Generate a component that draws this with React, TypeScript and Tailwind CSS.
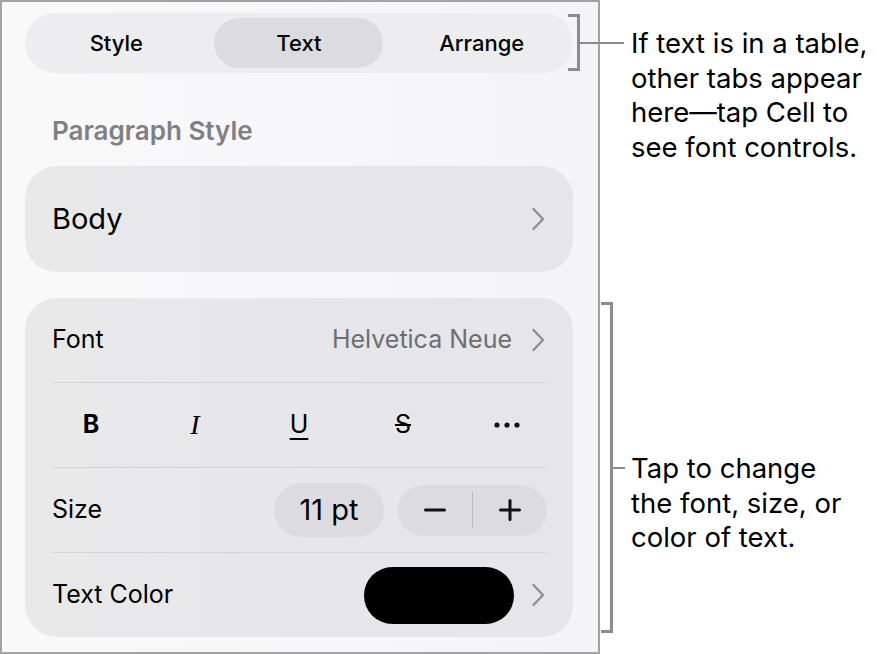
import React from 'react';

const Chevron = () => (
  <svg width="14" height="24" viewBox="0 0 14 24" fill="none" stroke="#8e8e93" strokeWidth="2.4" strokeLinecap="round" strokeLinejoin="round">
    <path d="M2.5 2 L12 12 L2.5 22" />
  </svg>
);

const Divider = () => <div className="mx-[27px] h-px bg-[#d3d3d8]" />;

const FormatButtons = () => (
  <div className="grid h-[84px] grid-cols-5 items-center px-[14px] text-black">
    <div className="flex justify-center text-[25px] font-bold">B</div>
    <div className="flex justify-center font-['Liberation_Serif',serif] text-[28px] italic">I</div>
    <div className="flex justify-center text-[25px] underline decoration-[2px] underline-offset-[5px]">U</div>
    <div className="flex justify-center text-[25px] line-through decoration-[1.5px]">S</div>
    <div className="flex justify-center">
      <svg width="26" height="6" viewBox="0 0 26 6" fill="#111">
        <circle cx="3" cy="3" r="2.6" />
        <circle cx="13" cy="3" r="2.6" />
        <circle cx="23" cy="3" r="2.6" />
      </svg>
    </div>
  </div>
);

export default function App() {
  return (
    <div className="relative flex h-[654px] w-[878px] bg-white font-['Inter',sans-serif] text-black">
      {/* inspector panel */}
      <div className="flex h-[654px] w-[600px] flex-col border-2 border-[#a3a3a3] bg-gradient-to-r from-[#f9f9fa] to-[#f4f4f7] pl-[23px] pt-[11px]">
        <div className="grid h-[60px] w-[548px] grid-cols-3 items-center rounded-full bg-[#ededf0] text-[22px] font-medium">
          <div className="text-center">Style</div>
          <div className="flex h-[50px] w-[169px] items-center justify-center justify-self-center rounded-full bg-[#dcdce0]">Text</div>
          <div className="text-center">Arrange</div>
        </div>

        <div className="h-[93px] pl-[27px] pt-[43px] text-[26px] font-semibold leading-[30px] text-[#808084]">Paragraph Style</div>

        <div className="flex h-[106px] w-[548px] items-center justify-between rounded-[32px] bg-gradient-to-r from-[#e9e9ea] to-[#e5e5ea] pl-[27px] pr-[28px]">
          <span className="text-[29px]">Body</span>
          <Chevron />
        </div>

        <div className="mt-[26px] flex w-[548px] flex-col rounded-[32px] bg-gradient-to-r from-[#e9e9ea] to-[#e5e5ea]">
          <div className="flex h-[84px] items-center justify-between pl-[27px] pr-[28px] text-[25px]">
            <span>Font</span>
            <div className="flex items-center gap-[19px]">
              <span className="text-[#6d6d72]">Helvetica Neue</span>
              <Chevron />
            </div>
          </div>
          <Divider />
          <FormatButtons />
          <Divider />
          <div className="flex h-[84px] items-center justify-between pl-[27px] pr-[26px] text-[25px]">
            <span>Size</span>
            <div className="flex items-center gap-[14px]">
              <div className="flex h-[54px] w-[110px] items-center justify-center rounded-full bg-[#dcdce0] text-[29px]">11 pt</div>
              <div className="flex h-[51px] w-[149px] items-center rounded-full bg-[#dcdce0]">
                <div className="flex flex-1 justify-center">
                  <svg width="22" height="4" viewBox="0 0 22 4"><rect width="22" height="3" y="0.5" rx="1.5" fill="#111" /></svg>
                </div>
                <div className="h-[36px] w-px bg-[#b9b9be]" />
                <div className="flex flex-1 justify-center">
                  <svg width="22" height="22" viewBox="0 0 22 22" fill="#111">
                    <rect x="0" y="9.5" width="22" height="3" rx="1.5" />
                    <rect x="9.5" y="0" width="3" height="22" rx="1.5" />
                  </svg>
                </div>
              </div>
            </div>
          </div>
          <Divider />
          <div className="flex h-[84px] items-center justify-between pl-[27px] pr-[28px] text-[25px]">
            <span>Text Color</span>
            <div className="flex items-center gap-[17px]">
              <div className="h-[57px] w-[150px] rounded-full bg-black" />
              <Chevron />
            </div>
          </div>
        </div>
      </div>

      {/* callouts */}
      <div className="flex flex-col pl-[31px] pt-[26px] text-[27.5px] leading-[34.5px] whitespace-nowrap">
        <p>
          If text is in a table,
          <br />
          other tabs appear
          <br />
          here—tap Cell to
          <br />
          see font controls.
        </p>
        <p className="mt-[287px]">
          Tap to change
          <br />
          the font, size, or
          <br />
          color of text.
        </p>
      </div>

      {/* bracket for tabs */}
      <div className="absolute left-[568px] top-[14px] h-[57px] w-[12px] border-y-[3px] border-r-[3px] border-[#8c8c8c]" />
      <div className="absolute left-[580px] top-[42px] h-[2px] w-[44px] bg-[#8c8c8c]" />

      {/* bracket for font controls */}
      <div className="absolute left-[601px] top-[302px] h-[331px] w-[12px] border-y-[3px] border-r-[3px] border-[#8c8c8c]" />
      <div className="absolute left-[613px] top-[467px] h-[2px] w-[12px] bg-[#8c8c8c]" />
    </div>
  );
}
